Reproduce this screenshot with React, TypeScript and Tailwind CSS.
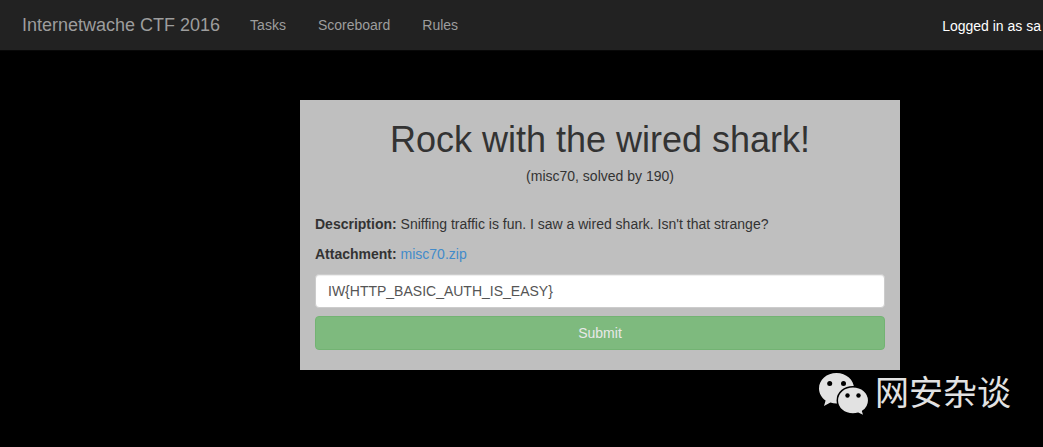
import { useState } from "react";

const links = ["Tasks", "Scoreboard", "Rules"];

function ChatLogo() {
  return (
    <svg width="52" height="44" viewBox="0 0 52 44" aria-hidden="true">
      <path
        fill="#e2e2e2"
        d="M18.5 1C8.700 1 1 7.800 1 16.500c0 5 2.600 9.200 6.600 12L6 34l6.400-3.500c2 .6 4 .9 6.100.9 9.800 0 17.500-6.300 17.500-14.900S28.300 1 18.500 1z"
      />
      <path
        fill="#e2e2e2"
        stroke="#000"
        strokeWidth="1.500"
        d="M35 14.700c-8.800 0-15.700 6-15.700 13.700S26.200 42 35 42c1.800 0 3.500-.3 5.200-.8l6 3-1.500-5c3.600-2.500 6-6.300 6-10.800 0-7.700-6.900-13.700-15.700-13.700z"
      />
      <g fill="#000">
        <circle cx="11.700" cy="11.600" r="2.500" />
        <circle cx="25.500" cy="11.600" r="2.500" />
        <circle cx="29.500" cy="23.500" r="2.200" />
        <circle cx="40.500" cy="23.500" r="2.200" />
      </g>
    </svg>
  );
}

export default function App() {
  const [flag, setFlag] = useState("IW{HTTP_BASIC_AUTH_IS_EASY}");

  return (
    <div className="relative min-h-screen overflow-hidden bg-black font-['Liberation_Sans',Arial,sans-serif] text-sm leading-5 text-[#333333]">
      <nav className="flex h-[51px] items-center border-b border-[#080808] bg-[#222222] pl-[22px] pr-0.5 text-[#9d9d9d]">
        <a href="#home" className="mr-[15px] whitespace-nowrap text-lg leading-5">
          Internetwache CTF 2016
        </a>
        <ul className="flex gap-0.5">
          {links.map((link) => (
            <li key={link}>
              <a href={`#${link.toLowerCase()}`} className="block px-[15px] py-[15px]">
                {link}
              </a>
            </li>
          ))}
        </ul>
        <p className="ml-auto whitespace-nowrap pt-0.5 text-white">Logged in as sa</p>
      </nav>

      <main className="pb-5 pl-[157px] pt-[49px]">
        <section className="mx-auto max-w-[600px] bg-[#bfbfbf] px-[15px] py-5">
          <header className="text-center">
            <h1 className="text-4xl leading-10">Rock with the wired shark!</h1>
            <p className="mt-1.5">(misc70, solved by 190)</p>
          </header>
          <p className="mt-7">
            <strong>Description:</strong> Sniffing traffic is fun. I saw a wired shark. Isn't that strange?
          </p>
          <p className="mt-2.5">
            <strong>Attachment:</strong>{" "}
            <a href="#misc70.zip" className="text-[#428bca]">
              misc70.zip
            </a>
          </p>
          <form className="mt-2.5 flex flex-col gap-2" onSubmit={(e) => e.preventDefault()}>
            <input
              type="text"
              aria-label="Flag"
              value={flag}
              onChange={(e) => setFlag(e.target.value)}
              className="h-[34px] w-full rounded border border-[#cccccc] bg-white px-3 text-[#555555] shadow-[inset_0_1px_1px_rgba(0,0,0,0.075)] outline-none"
            />
            <button
              type="submit"
              disabled
              className="h-[34px] w-full rounded border border-[#4cae4c] bg-[#5cb85c] text-white opacity-65"
            >
              Submit
            </button>
          </form>
        </section>
      </main>

      <div className="absolute bottom-[31px] right-8 flex items-end gap-[5px] text-[#e2e2e2]">
        <ChatLogo />
        <span className="whitespace-nowrap font-['Noto_Sans_CJK_SC',sans-serif] text-[34px] font-normal leading-[50px]">
          网安杂谈
        </span>
      </div>
    </div>
  );
}
